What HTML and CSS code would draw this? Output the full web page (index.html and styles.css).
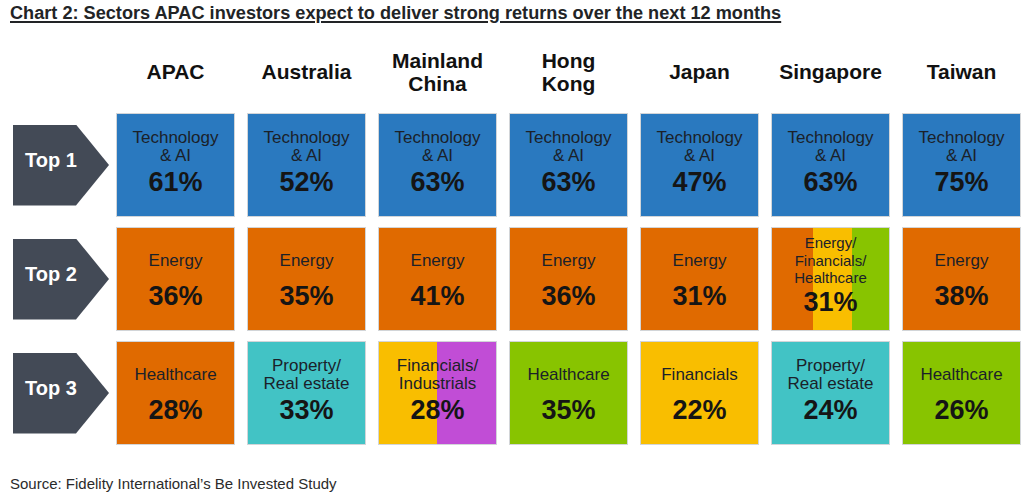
FILE: index.html
```html
<!DOCTYPE html>
<html lang="en">
<head>
<meta charset="utf-8">
<title>Chart 2</title>
<link rel="stylesheet" href="styles.css">
</head>
<body>
<div class="page">
  <h1 class="title">Chart 2: Sectors APAC investors expect to deliver strong returns over the next 12 months</h1>
  <div class="chart">
    <div class="corner"></div>
    <div class="head">APAC</div>
    <div class="head">Australia</div>
    <div class="head">Mainland<br>China</div>
    <div class="head">Hong<br>Kong</div>
    <div class="head">Japan</div>
    <div class="head">Singapore</div>
    <div class="head">Taiwan</div>

    <div class="rank"><div class="arrow">Top 1</div></div>
    <div class="cell blue"><div class="label">Technology<br>&amp; AI</div><div class="pct">61%</div></div>
    <div class="cell blue"><div class="label">Technology<br>&amp; AI</div><div class="pct">52%</div></div>
    <div class="cell blue"><div class="label">Technology<br>&amp; AI</div><div class="pct">63%</div></div>
    <div class="cell blue"><div class="label">Technology<br>&amp; AI</div><div class="pct">63%</div></div>
    <div class="cell blue"><div class="label">Technology<br>&amp; AI</div><div class="pct">47%</div></div>
    <div class="cell blue"><div class="label">Technology<br>&amp; AI</div><div class="pct">63%</div></div>
    <div class="cell blue"><div class="label">Technology<br>&amp; AI</div><div class="pct">75%</div></div>

    <div class="rank"><div class="arrow">Top 2</div></div>
    <div class="cell orange"><div class="label">Energy</div><div class="pct">36%</div></div>
    <div class="cell orange"><div class="label">Energy</div><div class="pct">35%</div></div>
    <div class="cell orange"><div class="label">Energy</div><div class="pct">41%</div></div>
    <div class="cell orange"><div class="label">Energy</div><div class="pct">36%</div></div>
    <div class="cell orange"><div class="label">Energy</div><div class="pct">31%</div></div>
    <div class="cell tri"><div class="label">Energy/<br>Financials/<br>Healthcare</div><div class="pct">31%</div></div>
    <div class="cell orange"><div class="label">Energy</div><div class="pct">38%</div></div>

    <div class="rank"><div class="arrow">Top 3</div></div>
    <div class="cell orange"><div class="label">Healthcare</div><div class="pct">28%</div></div>
    <div class="cell teal"><div class="label">Property/<br>Real estate</div><div class="pct">33%</div></div>
    <div class="cell duo"><div class="label">Financials/<br>Industrials</div><div class="pct">28%</div></div>
    <div class="cell green"><div class="label">Healthcare</div><div class="pct">35%</div></div>
    <div class="cell yellow"><div class="label">Financials</div><div class="pct">22%</div></div>
    <div class="cell teal"><div class="label">Property/<br>Real estate</div><div class="pct">24%</div></div>
    <div class="cell green"><div class="label">Healthcare</div><div class="pct">26%</div></div>
  </div>
  <p class="source">Source: Fidelity International’s Be Invested Study</p>
</div>
</body>
</html>
```
FILE: styles.css
```css
html, body {
  margin: 0;
  padding: 0;
  background: #ffffff;
}

.page {
  width: 1033px;
  height: 502px;
  overflow: hidden;
  font-family: "Liberation Sans", Arial, sans-serif;
  color: #1d1d1f;
}

.title {
  margin: 0;
  padding: 3px 0 0 10px;
  font-size: 18.15px;
  line-height: 21px;
  font-weight: 700;
  color: #222426;
  text-decoration: underline;
  text-decoration-thickness: 2px;
  text-underline-offset: 2px;
}

.chart {
  margin: 16px 0 0 13px;
  display: grid;
  grid-template-columns: 91px repeat(7, 119px);
  grid-template-rows: 63px repeat(3, 104px);
  column-gap: 12px;
  row-gap: 10px;
}

.head {
  display: flex;
  align-items: center;
  justify-content: center;
  text-align: center;
  font-size: 21px;
  line-height: 23px;
  font-weight: 700;
  color: #111111;
}

.rank {
  display: flex;
  align-items: center;
}

.arrow {
  flex: none;
  width: 96px;
  height: 81px;
  box-sizing: border-box;
  padding: 0 0 9px 12px;
  display: flex;
  align-items: center;
  background: #434a56;
  clip-path: polygon(0 0, 65.6% 0, 100% 50%, 65.6% 100%, 0 100%);
  color: #ffffff;
  font-size: 20px;
  font-weight: 700;
  white-space: nowrap;
}

.cell {
  box-sizing: border-box;
  border: 1px solid #d2d5d8;
  padding-top: 11px;
  display: flex;
  flex-direction: column;
  align-items: center;
  text-align: center;
}

.label {
  height: 43px;
  display: flex;
  align-items: center;
  justify-content: center;
  font-size: 17px;
  line-height: 18px;
  color: #1b2129;
}

.pct {
  margin-top: 1px;
  font-size: 27px;
  line-height: 27px;
  font-weight: 700;
  color: #151515;
}

.blue { background: #2a79bf; }
.orange { background: #e06a00; }
.yellow { background: #f9be00; }
.green { background: #88c400; }
.teal { background: #42c3c5; }

.duo {
  background: linear-gradient(to right, #f9be00 0 50%, #c14dd6 50% 100%);
}

.tri {
  padding-top: 6px;
  background: linear-gradient(to right, #e06a00 0 35%, #f9be00 35% 68%, #88c400 68% 100%);
}

.tri .label {
  height: 52.5px;
  font-size: 15px;
  line-height: 17.5px;
}

.tri .pct {
  margin-top: 2px;
}

.source {
  margin: 30px 0 0 10px;
  font-size: 15px;
  line-height: 18px;
  color: #2b2b2b;
}
```
